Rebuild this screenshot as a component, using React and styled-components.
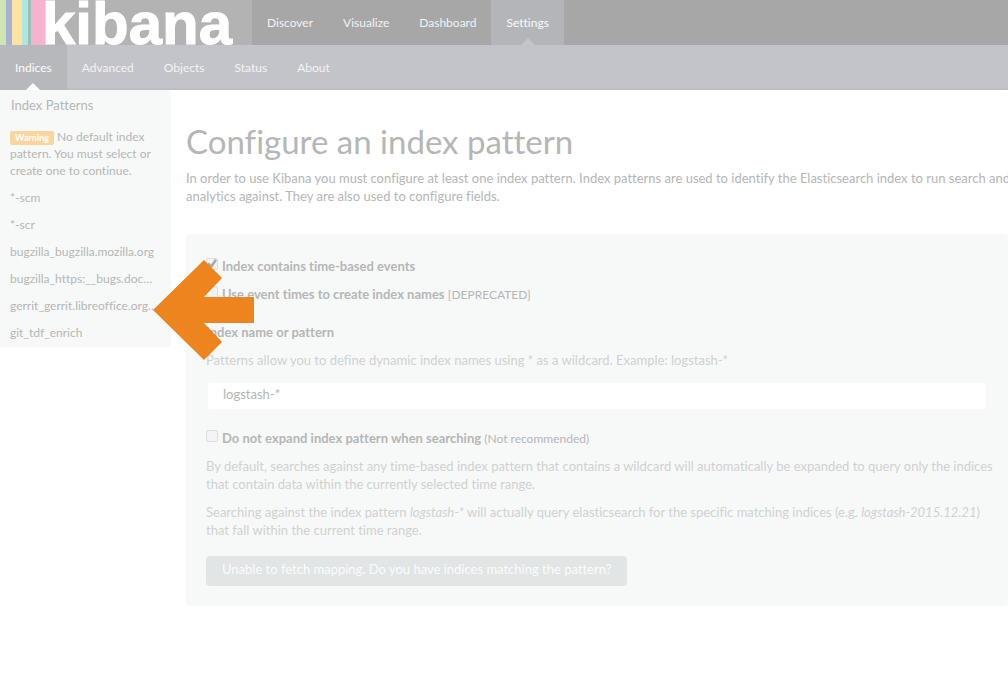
import React from "react";
import styled, { createGlobalStyle } from "styled-components";

const GlobalStyle = createGlobalStyle`
  * { box-sizing: border-box; }
  body {
    margin: 0;
    background: #fff;
    color: #b5b6b6;
    font: 13px/18px Lato, sans-serif;
    font-variant-ligatures: none;
    overflow-x: hidden;
  }
  h1, p, ul { margin: 0; padding: 0; }
  a { color: inherit; text-decoration: none; }
`;

const Page = styled.div`
  position: relative;
`;

const NavBar = styled.nav`
  display: flex;
  height: 45px;
  background: ${(p) => (p.$sub ? "#c3c4ca" : "#a7a7a7")};
  box-shadow: ${(p) => (p.$sub ? "inset 0 -3px 3px -2px #b5b6bb" : "none")};
`;

const Brand = styled.a`
  display: block;
  width: 252px;
  height: 45px;
  background: #b3b3b3;
`;

const NavLink = styled.a`
  position: relative;
  padding: 0 15px;
  font-size: 12px;
  line-height: 45px;
  color: ${(p) => (p.$active ? "#fbfbfb" : "#f3f3f4")};
  background: ${(p) => (p.$active ? p.$fill : "transparent")};

  &::after {
    content: "";
    display: ${(p) => (p.$active ? "block" : "none")};
    position: absolute;
    left: 50%;
    bottom: 0;
    margin-left: -7px;
    border: 7px solid transparent;
    border-top: 0;
    border-bottom-color: ${(p) => p.$arrow};
  }
`;

const Columns = styled.div`
  display: flex;
  align-items: flex-start;
`;

const Sidebar = styled.aside`
  flex: none;
  width: 171px;
  padding: 6px 0 1px;
  background: #f7f9f8;
  font-size: 12px;
  line-height: 17px;
`;

const SidebarTitle = styled.div`
  padding: 0 11px;
  font-size: 13px;
  line-height: 18px;
`;

const Notice = styled.p`
  && { padding: 14px 10px 5px; }
`;

const WarningLabel = styled.span`
  padding: 1px 5px 2px;
  border-radius: 2px;
  background: #fad59d;
  color: #fff;
  font-size: 9px;
  font-weight: 700;
  line-height: 1;
`;

const PatternList = styled.ul`
  list-style: none;
`;

const PatternLink = styled.a`
  display: block;
  padding: 5px 13px 5px 10px;
  overflow: hidden;
  white-space: nowrap;
  text-overflow: ellipsis;
`;

const Main = styled.main`
  flex: 1;
  min-width: 0;
  padding: 33px 0 0 15px;
`;

const Title = styled.h1`
  font-size: 33px;
  font-weight: 400;
  line-height: 37px;
`;

const Intro = styled.p`
  && { margin: 9px 0 29px; }
  white-space: nowrap;
`;

const Form = styled.form`
  display: flex;
  flex-direction: column;
  align-items: stretch;
  gap: 10px;
  padding: 23px 20px 20px;
  border-radius: 4px;
  background: #f7f9f8;
`;

const CheckRow = styled.div`
  display: flex;
  align-items: flex-start;
  gap: 4px;
`;

const Label = styled.label`
  font-weight: 700;
`;

const Small = styled.small`
  font-size: 12px;
  font-weight: 400;
  line-height: 1;
`;

const Checkbox = styled.input.attrs({ type: "checkbox" })`
  appearance: none;
  flex: none;
  width: 12px;
  height: 12px;
  margin: 1px 0 0;
  border: 1px solid #dcdddd;
  border-radius: 2px;
  background: #f3f4f4;

  &:checked::before {
    content: "";
    display: block;
    width: 10px;
    height: 10px;
    background: #a9a9a9;
    clip-path: polygon(0 50%, 20% 35%, 40% 55%, 80% 0, 100% 15%, 42% 100%);
  }
`;

const Field = styled.div`
  display: flex;
  flex-direction: column;
  gap: 10px;
  padding: 10px 0 8px;
`;

const Hint = styled.p`
  color: #cfd1d1;
  white-space: nowrap;
`;

const TextInput = styled.input`
  width: 100%;
  height: 30px;
  margin-top: 2px;
  padding: 0 15px 4px;
  border: 2px solid #f7f9f8;
  border-radius: 4px;
  background: #fff;
  color: #b5b6b6;
  font: inherit;
`;

const SubmitButton = styled.button`
  align-self: flex-start;
  height: 30px;
  margin-top: 7px;
  padding: 0 16px 4px;
  border: 0;
  border-radius: 4px;
  background: #e1e5e6;
  color: #fbfcfc;
  font: inherit;
`;

const Pointer = styled.svg`
  position: absolute;
  left: 153px;
  top: 260px;
`;

const stripes = [
  [0, 6, "#cde6b4"],
  [6, 6, "#a9b1d3"],
  [12, 10, "#fbe3a2"],
  [22, 6, "#aee6e0"],
  [28, 3, "#98c0bb"],
  [31, 15, "#f7b2d0"],
];

const sections = ["Discover", "Visualize", "Dashboard", "Settings"];
const settings = ["Indices", "Advanced", "Objects", "Status", "About"];
const patterns = [
  "*-scm",
  "*-scr",
  "bugzilla_bugzilla.mozilla.org",
  "bugzilla_https:__bugs.documentfoundation.org",
  "gerrit_gerrit.libreoffice.org_enrich",
  "git_tdf_enrich",
];

function Logo() {
  return (
    <svg width="252" height="45" role="img" aria-label="kibana">
      {stripes.map(([x, w, fill]) => (
        <rect key={x} x={x} width={w} height="45" fill={fill} />
      ))}
      <text x="42" y="44" fill="#fff" stroke="#fff" fontFamily="Liberation Sans, sans-serif" fontWeight="700" fontSize="60">
        kibana
      </text>
    </svg>
  );
}

export default function App() {
  return (
    <Page>
      <GlobalStyle />
      <NavBar>
        <Brand href="#"><Logo /></Brand>
        {sections.map((name) => (
          <NavLink key={name} href="#" $active={name === "Settings"} $fill="#b4b5b8" $arrow="#c3c4ca">
            {name}
          </NavLink>
        ))}
      </NavBar>
      <NavBar $sub>
        {settings.map((name) => (
          <NavLink key={name} href="#" $active={name === "Indices"} $fill="#b7b8bc" $arrow="#fff">
            {name}
          </NavLink>
        ))}
      </NavBar>
      <Columns>
        <Sidebar>
          <SidebarTitle>Index Patterns</SidebarTitle>
          <Notice>
            <WarningLabel>Warning</WarningLabel> No default index pattern. You must select or create one to continue.
          </Notice>
          <PatternList>
            {patterns.map((name) => (
              <li key={name}><PatternLink href="#">{name}</PatternLink></li>
            ))}
          </PatternList>
        </Sidebar>
        <Main>
          <Title>Configure an index pattern</Title>
          <Intro>
            In order to use Kibana you must configure at least one index pattern. Index patterns are used to identify
            the Elasticsearch index to run search and
            <br />
            analytics against. They are also used to configure fields.
          </Intro>
          <Form>
            <CheckRow>
              <Checkbox id="time" defaultChecked />
              <Label htmlFor="time">Index contains time-based events</Label>
            </CheckRow>
            <CheckRow>
              <Checkbox id="names" />
              <Label htmlFor="names">Use event times to create index names <Small>[DEPRECATED]</Small></Label>
            </CheckRow>
            <Field>
              <Label htmlFor="pattern">Index name or pattern</Label>
              <Hint>
                Patterns allow you to define dynamic index names using * as a wildcard. Example: logstash-*
              </Hint>
              <TextInput id="pattern" type="text" defaultValue="logstash-*" />
            </Field>
            <CheckRow>
              <Checkbox id="expand" />
              <Label htmlFor="expand">Do not expand index pattern when searching <Small>(Not recommended)</Small></Label>
            </CheckRow>
            <Hint>
              By default, searches against any time-based index pattern that contains a wildcard will automatically be
              expanded to query only the indices
              <br />
              that contain data within the currently selected time range.
            </Hint>
            <Hint>
              Searching against the index pattern <em>logstash-*</em> will actually query elasticsearch for the specific
              matching indices (e.g. <em>logstash-2015.12.21</em>)
              <br />
              that fall within the current time range.
            </Hint>
            <SubmitButton type="button">
              Unable to fetch mapping. Do you have indices matching the pattern?
            </SubmitButton>
          </Form>
        </Main>
      </Columns>
      <Pointer width="101" height="101" viewBox="0 0 101 101" aria-hidden="true">
        <path d="M0 50 51 0 69 18 51 37H101V63H51L69 82 51 100Z" fill="#ed841d" />
      </Pointer>
    </Page>
  );
}
